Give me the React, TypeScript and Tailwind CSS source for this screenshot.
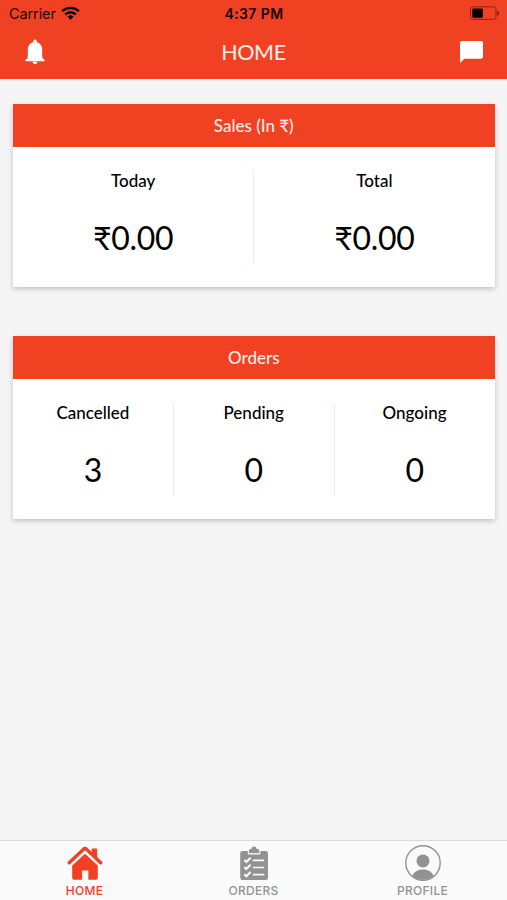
import React from 'react';

const SALES = [
  { label: 'Today', value: '₹0.00' },
  { label: 'Total', value: '₹0.00' },
];

const ORDERS = [
  { label: 'Cancelled', value: '3' },
  { label: 'Pending', value: '0' },
  { label: 'Ongoing', value: '0' },
];

const HomeIcon = () => (
  <svg className="w-9 h-9" viewBox="0 0 36 36" fill="currentColor">
    <path d="M25.400 3.500h4a.8.8 0 0 1 .8.8v10l-5.600-5V4.300a.8.8 0 0 1 .8-.8z" />
    <path d="M2.300 17.800 16.300 4.400a2.500 2.500 0 0 1 3.400 0l14 13.400" fill="none" stroke="currentColor" strokeWidth="3.400" strokeLinecap="round" strokeLinejoin="round" />
    <path d="M18 8.800 30.800 20.600v11.600a2.600 2.600 0 0 1-2.600 2.600h-6.800v-9.400h-6.300v9.400H7.800a2.600 2.600 0 0 1-2.600-2.600V20.600z" />
  </svg>
);

const OrdersIcon = () => (
  <svg className="w-9 h-9" viewBox="0 0 36 36">
    <path fill="currentColor" d="M6.500 6h6.300v3h10.600V6h6.300a2.300 2.300 0 0 1 2.300 2.300v24.500a2.300 2.300 0 0 1-2.300 2.300H6.500a2.300 2.300 0 0 1-2.300-2.300V8.300A2.300 2.300 0 0 1 6.500 6z" />
    <path fill="currentColor" d="M13 8.300V5.600c0-1 .7-1.700 1.700-1.700h.9a2.500 2.500 0 0 1 5 0h.9c1 0 1.700.7 1.700 1.700v2.700z" />
    <path d="M12.300 6v3h11.600V6" fill="none" stroke="#fafafa" strokeWidth="1" />
    <path d="m8.300 15 2 2 4.300-4.300M8.300 22.100l2 2 4.300-4.300M8.300 29.200l2 2 4.300-4.300" fill="none" stroke="#fafafa" strokeWidth="2.100" />
    <path d="M16.800 15.400h11.400M16.800 22.500h11.400M16.800 29.600h11.400" fill="none" stroke="#fafafa" strokeWidth="1.700" />
  </svg>
);

const ProfileIcon = () => (
  <svg className="w-9 h-9" viewBox="0 0 36 36" fill="currentColor">
    <circle cx="18" cy="18" r="17.200" fill="none" stroke="currentColor" strokeWidth="1.400" />
    <circle cx="18" cy="15.900" r="6.500" />
    <path d="M7.300 31c1.700-4.300 5.500-6.600 10.700-6.600s9 2.300 10.700 6.600A16.500 16.500 0 0 1 18 34.700 16.500 16.500 0 0 1 7.300 31z" />
  </svg>
);

const TABS = [
  { name: 'HOME', Icon: HomeIcon, active: true },
  { name: 'ORDERS', Icon: OrdersIcon, active: false },
  { name: 'PROFILE', Icon: ProfileIcon, active: false },
];

const StatusBar = () => (
  <div className="grid grid-cols-3 items-center h-7 pl-2 pr-[7px] text-black text-[14.5px] font-['Inter',sans-serif]">
    <div className="flex items-center gap-[5px] pl-px">
      <span className="opacity-85 tracking-[-0.1px]">Carrier</span>
      <svg className="w-[19px] h-[14px] -mt-0.5" viewBox="0 0 19 14" fill="none" stroke="currentColor" strokeWidth="2.400">
        <path d="M1.200 5.200a12 12 0 0 1 16.600 0M4.200 8.500a7.600 7.600 0 0 1 10.600 0" />
        <path d="M9.500 13.700 6.500 10.600a4.300 4.300 0 0 1 6 0z" fill="currentColor" stroke="none" />
      </svg>
    </div>
    <span className="-mt-0.5 text-center text-[14px] font-semibold tracking-[0.4px] opacity-90">4:37 PM</span>
    <svg className="w-[31px] h-[14px] -mt-0.5 justify-self-end" viewBox="0 0 31 14">
      <rect x="1.500" y=".8" width="25.500" height="12.600" rx="2.500" fill="none" stroke="#8d2413" />
      <rect x="3.300" y="2.400" width="10.500" height="9.300" rx="1" fill="#000" />
      <path d="M28 4.500c1.300.4 2.200 1.400 2.200 2.700S29.300 9.500 28 9.900z" fill="#8d2413" />
    </svg>
  </div>
);

const Card: React.FC<{ title: string; items: { label: string; value: string }[] }> = ({ title, items }) => (
  <section className="h-[183px] bg-white shadow-[0_2px_5px_rgba(0,0,0,0.22)]">
    <h2 className="h-[43px] bg-[#f04123] text-white/90 text-[17px] font-medium leading-[43px] text-center">{title}</h2>
    <div className="flex h-[140px] py-6 divide-x divide-[#e0f0fa]">
      {items.map((item) => (
        <div key={item.label} className="flex-1 flex flex-col items-center text-black">
          <span className="text-[17px] font-medium leading-5">{item.label}</span>
          <span className="mt-[26px] text-[32px] leading-[42px] tracking-[-0.3px]">{item.value}</span>
        </div>
      ))}
    </div>
  </section>
);

const App: React.FC = () => {
  return (
    <div className="flex flex-col h-screen bg-[#f5f5f5] font-['Lato',sans-serif]">
      <header className="h-[79px] bg-[#f04123]">
        <StatusBar />
        <div className="flex items-center justify-between h-12 pl-[25px] pr-6 text-white">
          <svg className="w-5 h-[26px]" viewBox="0 0 20 26" fill="currentColor">
            <path d="M10 .5c1.100 0 1.900.8 1.900 1.900v.9c3.400.9 5.300 3.800 5.300 7.800v6.300c0 1.400.6 2.200 2.300 3.300v1.600H.5v-1.600c1.700-1.100 2.300-1.900 2.300-3.300v-6.300c0-4 1.900-6.900 5.300-7.800v-.9C8.100 1.300 8.900.5 10 .5zM7.600 22.800h4.800a2.400 2.400 0 0 1-4.800 0z" />
          </svg>
          <h1 className="pl-0.5 text-[21.5px] leading-7 tracking-[-0.4px] text-white/90">HOME</h1>
          <svg className="w-[23px] h-[22px]" viewBox="0 0 23 22" fill="currentColor">
            <path d="M2 0h19a2 2 0 0 1 2 2v13.800a2 2 0 0 1-2 2H4.300L0 22V2a2 2 0 0 1 2-2z" />
          </svg>
        </div>
      </header>

      <main className="flex-1 flex flex-col gap-[49px] pt-[24.5px] pl-[13px] pr-[12.5px]">
        <Card title="Sales (In ₹)" items={SALES} />
        <Card title="Orders" items={ORDERS} />
      </main>

      <nav className="flex h-[60px] bg-[#fafafa] border-t border-[#d9d9d9] font-['Inter',sans-serif]">
        {TABS.map(({ name, Icon, active }) => (
          <button
            key={name}
            className={`flex-1 flex flex-col items-center pt-1 text-[12px] leading-[14px] tracking-[0.3px] ${active ? 'text-[#f04123]' : 'text-[#929292]'}`}
          >
            <Icon />
            <span className="mt-[3px] font-medium">{name}</span>
          </button>
        ))}
      </nav>
    </div>
  );
};

export default App;
